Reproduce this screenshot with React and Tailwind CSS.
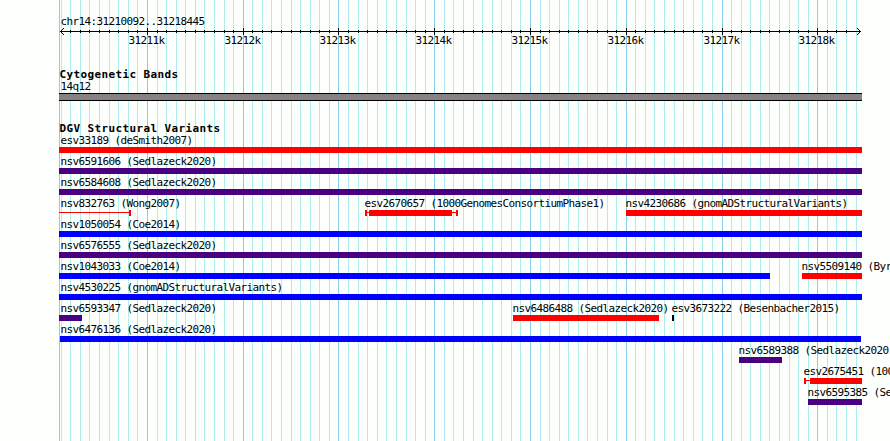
import React from "react";

const START = 31210092;
const END = 31218445;
const LEFT = 60;
const WIDTH = 800;

const toX = (pos) =>
  Math.round(LEFT + ((pos - START) * WIDTH) / (END - START + 1));

const ticks = [];
for (let pos = 31210100; pos <= 31218400; pos += 100) {
  ticks.push({ pos, x: toX(pos), major: pos % 1000 === 0 });
}
const majorTicks = ticks.filter((t) => t.major);

const COLORS = {
  loss: "bg-[#ff0000]",
  gain: "bg-[#0000ff]",
  complex: "bg-[#4b0082]",
  other: "bg-black",
};

// from/to: drawn extent, thick: solid part, caps: end markers of 2px
const rows = [
  [{ name: "esv33189 (deSmith2007)", type: "loss", from: 59, to: 862 }],
  [{ name: "nsv6591606 (Sedlazeck2020)", type: "complex", from: 59, to: 862 }],
  [{ name: "nsv6584608 (Sedlazeck2020)", type: "complex", from: 59, to: 862 }],
  [
    { name: "nsv832763 (Wong2007)", type: "loss", from: 59, to: 131, thick: null, capEnd: true },
    {
      name: "esv2670657 (1000GenomesConsortiumPhase1)",
      type: "loss",
      from: 365,
      to: 458,
      thick: [369, 452],
      capStart: true,
      capEnd: true,
    },
    { name: "nsv4230686 (gnomADStructuralVariants)", type: "loss", from: 626, to: 862 },
  ],
  [{ name: "nsv1050054 (Coe2014)", type: "gain", from: 59, to: 862 }],
  [{ name: "nsv6576555 (Sedlazeck2020)", type: "complex", from: 59, to: 862 }],
  [
    { name: "nsv1043033 (Coe2014)", type: "gain", from: 59, to: 770 },
    { name: "nsv5509140 (Byr", type: "loss", from: 802, to: 862 },
  ],
  [{ name: "nsv4530225 (gnomADStructuralVariants)", type: "gain", from: 59, to: 862 }],
  [
    { name: "nsv6593347 (Sedlazeck2020)", type: "complex", from: 59, to: 82 },
    { name: "nsv6486488 (Sedlazeck2020)", type: "loss", from: 513, to: 659 },
    { name: "esv3673222 (Besenbacher2015)", type: "other", from: 672, to: 674 },
  ],
  [{ name: "nsv6476136 (Sedlazeck2020)", type: "gain", from: 60, to: 861 }],
  [{ name: "nsv6589388 (Sedlazeck2020", type: "complex", from: 739, to: 782 }],
  [
    {
      name: "esv2675451 (100",
      type: "loss",
      from: 804,
      to: 862,
      thick: [810, 862],
      capStart: true,
    },
  ],
  [{ name: "nsv6595385 (Se", type: "complex", from: 808, to: 862 }],
];

const Grid = () => (
  <svg
    className="absolute inset-0"
    width="890"
    height="441"
    shapeRendering="crispEdges"
  >
    {ticks.map((t) => (
      <rect
        key={t.pos}
        x={t.x}
        y="0"
        width="1"
        height="441"
        fill={t.major ? "#87ceeb" : "#afeeee"}
      />
    ))}
    <rect x="59" y="0" width="1" height="441" fill="#87ceeb" />
  </svg>
);

const Ruler = () => (
  <svg
    className="block"
    width="890"
    height="7"
    shapeRendering="crispEdges"
  >
    <rect x="60" y="3" width="801" height="1" />
    {ticks
      .filter((t) => t.x > 61 && t.x < 856)
      .map((t) => (
        <rect
          key={t.pos}
          x={t.x}
          y={t.major ? 0 : 2}
          width="1"
          height={t.major ? 7 : 3}
        />
      ))}
    {/* Arrow heads */}
    {[1, 2, 3].map((n) => (
      <g key={n}>
        <rect x={60 + n} y={3 - n} width="1" height="1" />
        <rect x={60 + n} y={3 + n} width="1" height="1" />
        <rect x={860 - n} y={3 - n} width="1" height="1" />
        <rect x={860 - n} y={3 + n} width="1" height="1" />
      </g>
    ))}
  </svg>
);

const Glyph = ({ feature }) => {
  const { from, to, thick, capStart, capEnd, type } = feature;
  const color = COLORS[type];

  if (thick === undefined) {
    return <div className={`h-1.5 ${color}`} style={{ width: to - from }} />;
  }

  const [a, b] = thick || [to, to];
  return (
    <div className="flex h-1.5" style={{ width: to - from }}>
      {capStart && <div className={`w-0.5 shrink-0 ${color}`} />}
      <div
        className={`mt-0.5 h-px ${color}`}
        style={{ width: a - from - (capStart ? 2 : 0) - (thick ? 0 : 2) }}
      />
      <div className={color} style={{ width: b - a }} />
      <div className={`mt-0.5 h-px grow ${color}`} />
      {capEnd && <div className={`w-0.5 shrink-0 ${color}`} />}
    </div>
  );
};

const Feature = ({ feature }) => {
  const { name, from } = feature;
  return (
    <div className="col-start-1 row-start-1 w-0" style={{ marginLeft: from }}>
      <div
        className="h-[13px] w-max"
        style={{ marginLeft: from <= 60 ? 60.5 - from : -0.5 }}
      >
        {name}
      </div>
      <Glyph feature={feature} />
    </div>
  );
};

const Heading = ({ children }) => (
  <h2 className="h-3 pl-[59.5px] font-bold tracking-[0.378px]">{children}</h2>
);

const App = () => {
  return (
    <div className="relative h-[441px] w-[890px] overflow-hidden bg-[#fdfffd] font-['DejaVu_Sans_Mono',monospace] text-[11px] leading-[13px] tracking-[-0.622px] whitespace-nowrap text-black">
      <Grid />

      <div className="relative pt-[15px]">
        {/* Scale */}
        <div className="h-[13px] pl-[60.5px]">chr14:31210092..31218445</div>
        <Ruler />
        <div className="-mt-px grid h-[13px]">
          {majorTicks.map((t) => (
            <span
              key={t.pos}
              className="col-start-1 row-start-1"
              style={{ marginLeft: t.x - 18.5 }}
            >
              {t.pos / 1000}k
            </span>
          ))}
        </div>

        {/* Cytogenetic bands */}
        <section className="mt-[21px]">
          <Heading>Cytogenetic Bands</Heading>
          <div className="h-[13px] pl-[60.5px]">14q12</div>
          <div className="ml-[59px] h-2 w-[803px] border-y border-black bg-[#878085]" />
        </section>

        {/* Structural variants */}
        <section className="mt-[21px]">
          <Heading>DGV Structural Variants</Heading>
          {rows.map((row, i) => (
            <div key={i} className="grid h-[21px] grid-cols-1">
              {row.map((feature) => (
                <Feature key={feature.name} feature={feature} />
              ))}
            </div>
          ))}
        </section>
      </div>
    </div>
  );
};

export default App;
